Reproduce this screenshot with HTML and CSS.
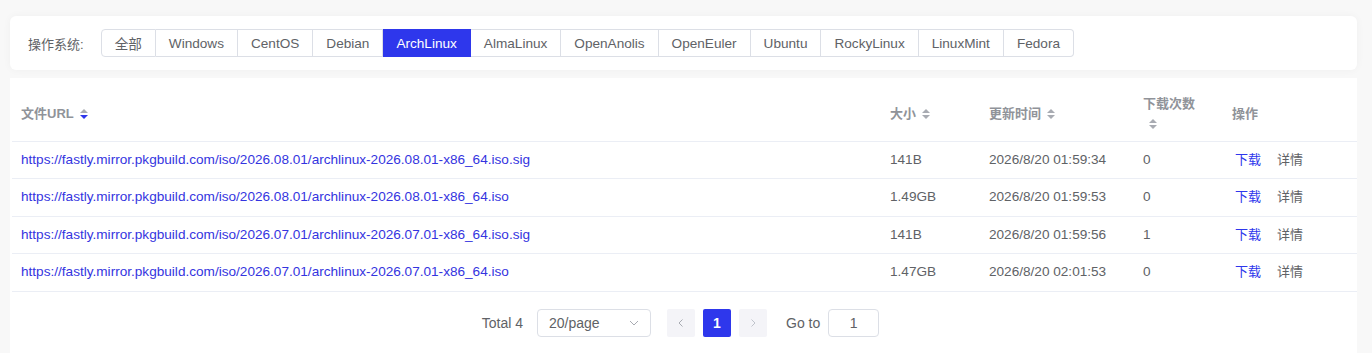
FILE: index.html
```html
<!DOCTYPE html>
<html lang="zh-CN">
<head>
<meta charset="utf-8">
<title>镜像列表</title>
<link rel="stylesheet" href="styles.css">
</head>
<body>
<div class="page">
  <div class="card filter">
    <span class="filter-label">操作系统:</span>
    <div class="btn-group">
      <span class="os-btn">全部</span>
      <span class="os-btn">Windows</span>
      <span class="os-btn">CentOS</span>
      <span class="os-btn">Debian</span>
      <span class="os-btn active">ArchLinux</span>
      <span class="os-btn">AlmaLinux</span>
      <span class="os-btn">OpenAnolis</span>
      <span class="os-btn">OpenEuler</span>
      <span class="os-btn">Ubuntu</span>
      <span class="os-btn">RockyLinux</span>
      <span class="os-btn">LinuxMint</span>
      <span class="os-btn">Fedora</span>
    </div>
  </div>

  <div class="card list">
    <table class="table">
      <colgroup>
        <col class="c-url"><col class="c-size"><col class="c-time"><col class="c-count"><col class="c-op">
      </colgroup>
      <thead>
        <tr>
          <th><span class="th-in">文件URL<span class="caret desc"><i class="up"></i><i class="down"></i></span></span></th>
          <th><span class="th-in">大小<span class="caret"><i class="up"></i><i class="down"></i></span></span></th>
          <th><span class="th-in">更新时间<span class="caret"><i class="up"></i><i class="down"></i></span></span></th>
          <th class="th-top"><span class="th-in wrap">下载次数<span class="caret"><i class="up"></i><i class="down"></i></span></span></th>
          <th>操作</th>
        </tr>
      </thead>
      <tbody>
        <tr>
          <td><a class="link" href="#">https://fastly.mirror.pkgbuild.com/iso/2026.08.01/archlinux-2026.08.01-x86_64.iso.sig</a></td>
          <td>141B</td><td>2026/8/20 01:59:34</td><td>0</td>
          <td><span class="op dl">下载</span><span class="op">详情</span></td>
        </tr>
        <tr>
          <td><a class="link" href="#">https://fastly.mirror.pkgbuild.com/iso/2026.08.01/archlinux-2026.08.01-x86_64.iso</a></td>
          <td>1.49GB</td><td>2026/8/20 01:59:53</td><td>0</td>
          <td><span class="op dl">下载</span><span class="op">详情</span></td>
        </tr>
        <tr>
          <td><a class="link" href="#">https://fastly.mirror.pkgbuild.com/iso/2026.07.01/archlinux-2026.07.01-x86_64.iso.sig</a></td>
          <td>141B</td><td>2026/8/20 01:59:56</td><td>1</td>
          <td><span class="op dl">下载</span><span class="op">详情</span></td>
        </tr>
        <tr>
          <td><a class="link" href="#">https://fastly.mirror.pkgbuild.com/iso/2026.07.01/archlinux-2026.07.01-x86_64.iso</a></td>
          <td>1.47GB</td><td>2026/8/20 02:01:53</td><td>0</td>
          <td><span class="op dl">下载</span><span class="op">详情</span></td>
        </tr>
      </tbody>
    </table>

    <div class="pager">
      <span class="total">Total 4</span>
      <div class="select"><span>20/page</span>
        <svg class="chev" width="12" height="12" viewBox="0 0 12 12"><path d="M2 4 L6 8 L10 4" fill="none" stroke="#a8abb2" stroke-width="1"/></svg>
      </div>
      <div class="pages">
        <span class="pg-btn"><svg width="10" height="10" viewBox="0 0 10 10"><path d="M6.5 1.5 L3 5 L6.5 8.5" fill="none" stroke="#a8abb2" stroke-width="1"/></svg></span>
        <span class="pg-btn current">1</span>
        <span class="pg-btn"><svg width="10" height="10" viewBox="0 0 10 10"><path d="M3.5 1.5 L7 5 L3.5 8.5" fill="none" stroke="#c0c4cc" stroke-width="1"/></svg></span>
      </div>
      <span class="goto">Go to</span>
      <div class="goto-input">1</div>
    </div>
  </div>
</div>
</body>
</html>
```
FILE: styles.css
```css
* { box-sizing: border-box; }
html, body { margin: 0; padding: 0; }
body {
  background: #f8f8f8;
  font-family: "Liberation Sans", "Noto Sans CJK SC", sans-serif;
  font-size: 14px;
  color: #606266;
}
.page {
  padding: 16px 15px 0 10px;
  display: flex;
  flex-direction: column;
  gap: 8px;
}
.card {
  background: #fff;
  border-radius: 6px;
}
.filter {
  height: 54px;
  padding: 0 18px;
  display: flex;
  align-items: center;
  gap: 17px;
  box-shadow: 0 0 8px rgba(0,0,0,0.04);
}
.filter-label { font-size: 13px; color: #606266; }
.btn-group { display: flex; }
.os-btn {
  display: flex;
  align-items: center;
  height: 28px;
  padding: 0 13px;
  border: 1px solid #dcdfe6;
  border-left-width: 0;
  background: #fff;
  color: #606266;
  font-size: 13.6px;
  white-space: nowrap;
  cursor: pointer;
}
.os-btn:first-child { border-left-width: 1px; border-radius: 4px 0 0 4px; }
.os-btn:last-child { border-radius: 0 4px 4px 0; }
.os-btn.active { background: #2e37ec; border-color: #2e37ec; color: #fff; }

.list {
  border-radius: 0;
  padding: 2px 0 16px 2px;
  min-height: 280px;
}
.table {
  width: 100%;
  border-collapse: collapse;
  table-layout: fixed;
}
.c-url { width: 869px; }
.c-size { width: 99px; }
.c-time { width: 154px; }
.c-count { width: 89px; }
.table th {
  text-align: left;
  font-weight: bold;
  color: #909399;
  font-size: 13px;
  padding: 12px 9px 4px;
  line-height: 22px;
  border-bottom: 1px solid #ebeef5;
  height: 61px;
}
.table th.th-top { vertical-align: top; padding-top: 13px; }
.th-in { display: inline-flex; align-items: center; gap: 6px; }
.th-in.wrap { display: inline-block; line-height: 22px; }
.th-in.wrap .caret { display: flex; margin: 4px 0 0 6px; }
.caret {
  display: inline-flex;
  flex-direction: column;
  gap: 2px;
}
.caret i {
  display: block;
  width: 0; height: 0;
  border-left: 4px solid transparent;
  border-right: 4px solid transparent;
}
.caret .up { border-bottom: 4px solid #a8abb2; }
.caret .down { border-top: 4px solid #a8abb2; }
.caret.desc .down { border-top-color: #2e37ec; }

.table td {
  padding: 8px 9px;
  line-height: 20.5px;
  border-bottom: 1px solid #ebeef5;
  font-size: 13.6px;
  color: #606266;
  white-space: nowrap;
}
.link { color: #3434e0; text-decoration: none; }
.op { display: inline-block; margin-left: 3px; margin-right: 13px; color: #606266; font-size: 13px; }
.op.dl { color: #2e37ec; }

.pager {
  margin-top: 17px;
  display: flex;
  justify-content: center;
  align-items: center;
  font-size: 14px;
  color: #606266;
  padding-right: 8px;
}
.total { margin-right: 14px; }
.select {
  width: 114px;
  height: 28px;
  border: 1px solid #dcdfe6;
  border-radius: 4px;
  display: flex;
  align-items: center;
  justify-content: space-between;
  padding: 0 10px 0 11px;
  margin-right: 16px;
}
.pages { display: flex; gap: 8px; margin-right: 19px; }
.pg-btn {
  width: 28px;
  height: 28px;
  border-radius: 2px;
  background: #f4f4f8;
  display: flex;
  align-items: center;
  justify-content: center;
  font-weight: bold;
  color: #606266;
}
.pg-btn.current { background: #2e37ec; color: #fff; }
.goto { margin-right: 8px; }
.goto-input {
  width: 51px;
  height: 28px;
  border: 1px solid #dcdfe6;
  border-radius: 4px;
  display: flex;
  align-items: center;
  justify-content: center;
}
```
